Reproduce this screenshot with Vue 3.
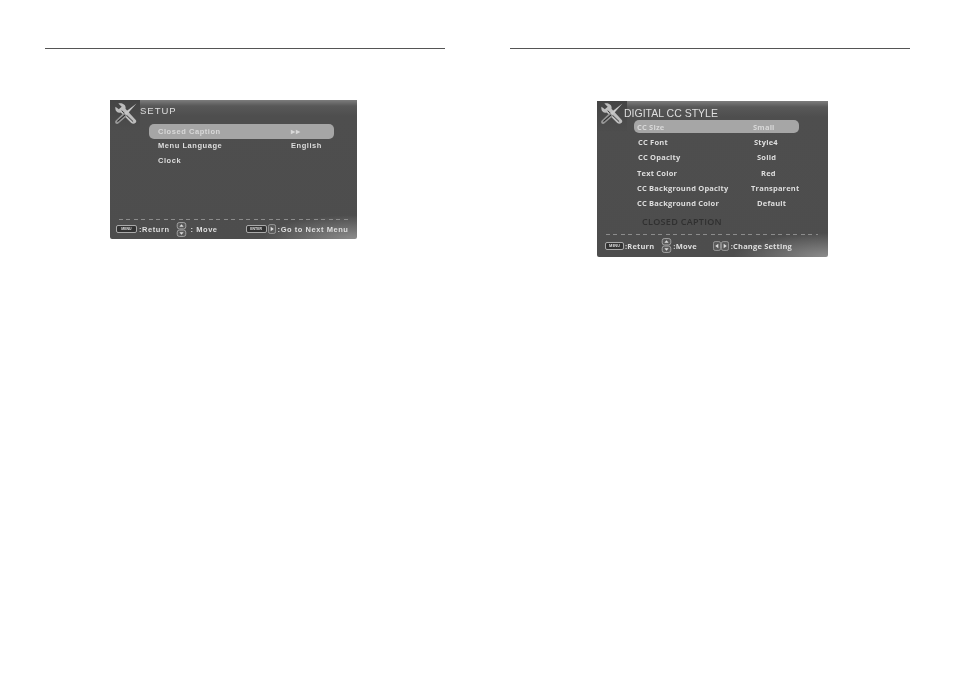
<script setup>
const setupRows = [
  { label: 'Closed Caption', value: '▸▸', active: true },
  { label: 'Menu Language', value: 'English' },
  { label: 'Clock', value: '' }
]

const styleRows = [
  { label: 'CC Size', value: 'Small', active: true, left: 3, right: 119, height: 13 },
  { label: 'CC Font', value: 'Style4', left: 4, right: 120, height: 15 },
  { label: 'CC Opacity', value: 'Solid', left: 4, right: 123, height: 16 },
  { label: 'Text Color', value: 'Red', left: 3, right: 127, height: 15 },
  { label: 'CC Background Opacity', value: 'Transparent', left: 3, right: 117, height: 15 },
  { label: 'CC Background Color', value: 'Default', left: 3, right: 123, height: 15 }
]
</script>

<template>
  <div class="sheet">
    <section class="page">
      <div class="rule"></div>
      <div class="screen screen-setup">
        <header class="head">
          <svg class="tools" viewBox="0 0 24 22">
            <path d="M1.5 4 C0.5 8.500 4 11 7 10 L18 21 C21 23 25 20 22.500 17.500 L12 6 C13 2 8.500 -0.500 4.500 0.500 L8 4 L5 6.500 Z" fill="#bdbdbd" />
            <path d="M8 8 L20 19.500" stroke="#2e2e2e" stroke-width="1" />
            <path d="M23.500 0.500 L10.500 10.500 L12.500 13 Z" fill="#c8c8c8" />
            <path d="M10.500 10 L1.500 18.500 C0 21 3 23 4.500 21.500 L13.500 13.500 Z" fill="#969696" />
            <path d="M3.500 19.500 L11.500 12.500" stroke="#262626" stroke-width="1.100" />
          </svg>
          <h1 class="title">SETUP</h1>
        </header>
        <ul class="menu">
          <li v-for="row in setupRows" :key="row.label" class="row" :class="{ active: row.active }">
            <span class="label">{{ row.label }}</span>
            <span class="value">{{ row.value }}</span>
          </li>
        </ul>
        <div class="dashes"></div>
        <footer class="foot">
          <span class="key">MENU</span>
          <span class="hint">:Return</span>
          <svg class="updown" viewBox="0 0 10 14">
            <rect x="1" y="0.5" width="8" height="6" rx="2" fill="#5a5a5a" stroke="#bbb" stroke-width="0.7" />
            <rect x="1" y="7.5" width="8" height="6" rx="2" fill="#5a5a5a" stroke="#bbb" stroke-width="0.7" />
            <path d="M5 2 L7 4.5 H3 Z M5 12 L7 9.5 H3 Z" fill="#ddd" />
          </svg>
          <span class="hint hint-move">: Move</span>
          <span class="key key-enter">ENTER</span>
          <svg class="square" viewBox="0 0 9 11">
            <rect x="0.5" y="0.5" width="8" height="10" rx="2" fill="#5a5a5a" stroke="#bbb" stroke-width="0.7" />
            <path d="M3 3 L6.5 5.5 L3 8 Z" fill="#ddd" />
          </svg>
          <span class="hint">:Go to Next Menu</span>
        </footer>
      </div>
    </section>

    <section class="page page-right">
      <div class="rule"></div>
      <div class="screen screen-style">
        <header class="head">
          <svg class="tools" viewBox="0 0 24 22">
            <path d="M1.5 4 C0.5 8.500 4 11 7 10 L18 21 C21 23 25 20 22.500 17.500 L12 6 C13 2 8.500 -0.500 4.500 0.500 L8 4 L5 6.500 Z" fill="#bdbdbd" />
            <path d="M8 8 L20 19.500" stroke="#2e2e2e" stroke-width="1" />
            <path d="M23.500 0.500 L10.500 10.500 L12.500 13 Z" fill="#c8c8c8" />
            <path d="M10.500 10 L1.500 18.500 C0 21 3 23 4.500 21.500 L13.500 13.500 Z" fill="#969696" />
            <path d="M3.500 19.500 L11.500 12.500" stroke="#262626" stroke-width="1.100" />
          </svg>
          <h1 class="title">DIGITAL CC STYLE</h1>
        </header>
        <ul class="menu">
          <li
            v-for="row in styleRows"
            :key="row.label"
            class="row"
            :class="{ active: row.active }"
            :style="{ height: row.height + 'px' }"
          >
            <span class="label" :style="{ marginLeft: row.left + 'px' }">{{ row.label }}</span>
            <span class="value" :style="{ left: row.right + 'px' }">{{ row.value }}</span>
          </li>
        </ul>
        <p class="preview">CLOSED CAPTION</p>
        <div class="dashes"></div>
        <footer class="foot">
          <span class="key">MENU</span>
          <span class="hint">:Return</span>
          <svg class="updown" viewBox="0 0 10 14">
            <rect x="1" y="0.5" width="8" height="6" rx="2" fill="#5a5a5a" stroke="#bbb" stroke-width="0.7" />
            <rect x="1" y="7.5" width="8" height="6" rx="2" fill="#5a5a5a" stroke="#bbb" stroke-width="0.7" />
            <path d="M5 2 L7 4.5 H3 Z M5 12 L7 9.5 H3 Z" fill="#ddd" />
          </svg>
          <span class="hint hint-move">:Move</span>
          <svg class="square square-left" viewBox="0 0 9 11">
            <rect x="0.5" y="0.5" width="8" height="10" rx="2" fill="#5a5a5a" stroke="#bbb" stroke-width="0.7" />
            <path d="M6 3 L2.5 5.5 L6 8 Z" fill="#ddd" />
          </svg>
          <svg class="square" viewBox="0 0 9 11">
            <rect x="0.5" y="0.5" width="8" height="10" rx="2" fill="#5a5a5a" stroke="#bbb" stroke-width="0.7" />
            <path d="M3 3 L6.5 5.5 L3 8 Z" fill="#ddd" />
          </svg>
          <span class="hint">:Change Setting</span>
        </footer>
      </div>
    </section>
  </div>
</template>

<style scoped>
* {
  margin: 0;
  padding: 0;
  box-sizing: border-box;
}

.sheet {
  display: flex;
  width: 954px;
  height: 675px;
  background: #fff;
  font-family: "Liberation Sans", Arial, sans-serif;
}

.page {
  width: 465px;
  padding: 48px 0 0 45px;
}

.page-right {
  width: 489px;
}

.rule {
  width: 400px;
  height: 1px;
  background: #555;
}

.screen {
  position: relative;
  overflow: hidden;
  color: #dedede;
  background:
    radial-gradient(ellipse 95px 24px at 100% 100%, #8c8c8c, transparent),
    linear-gradient(180deg, #7c7c7c 0, #585858 6px, #4e4e4e 16px, #4d4d4d 100%);
  border-radius: 0 0 2px 2px;
  filter: blur(0.45px);
}

.screen::before {
  content: "";
  position: absolute;
  top: 0;
  left: 0;
  width: 30px;
  height: 30px;
  background: linear-gradient(180deg, #444, #4d4d4d);
}

.screen-setup {
  width: 247px;
  height: 139px;
  margin: 51px 0 0 65px;
}

.screen-style {
  width: 231px;
  height: 156px;
  margin: 52px 0 0 87px;
}

.head {
  position: relative;
  display: flex;
  align-items: center;
}

.screen-setup .head {
  height: 24px;
  padding: 2px 0 0 4px;
}

.screen-style .head {
  height: 19px;
  padding: 5px 0 0 3px;
}

.tools {
  width: 23px;
  height: 21px;
  flex: none;
}

.title {
  font-size: 9.5px;
  font-weight: 400;
  letter-spacing: 1px;
  margin: -6px 0 0 3px;
  white-space: nowrap;
}

.screen-style .title {
  font-size: 10.5px;
  letter-spacing: 0;
  margin: -1px 0 0 1px;
}

.menu {
  list-style: none;
}

.screen-setup .menu {
  margin-left: 39px;
  width: 185px;
}

.screen-style .menu {
  margin-left: 37px;
  width: 165px;
}

.row {
  position: relative;
  display: flex;
  align-items: center;
  font-size: 7.5px;
  font-weight: 700;
  white-space: nowrap;
}

.screen-setup .row {
  height: 14.5px;
  letter-spacing: 0.55px;
}

.screen-setup .label {
  margin-left: 9px;
}

.screen-setup .value {
  position: absolute;
  left: 142px;
}

.screen-style .row {
  font-family: "Open Sans", "Liberation Sans", sans-serif;
  letter-spacing: 0.2px;
}

.screen-style .value {
  position: absolute;
}

.row.active {
  background: #a6a6a6;
  border-radius: 5px;
  color: #d8d8d8;
}

.screen-style .row.active {
  margin-bottom: 1px;
}

.preview {
  margin: 6px 0 0 45px;
  font-family: "Open Sans", "Liberation Sans", sans-serif;
  font-size: 9px;
  font-weight: 600;
  letter-spacing: 0.3px;
  line-height: 12px;
  color: #303030;
}

.dashes {
  margin-left: 9px;
  width: 229px;
  height: 1px;
  background: repeating-linear-gradient(90deg, #8c8c8c 0 4px, transparent 4px 7.5px);
}

.screen-setup .dashes {
  margin-top: 51px;
}

.screen-style .dashes {
  margin-top: 6px;
  width: 212px;
}

.foot {
  position: relative;
  display: flex;
  align-items: center;
  height: 19px;
  padding-left: 6px;
  font-size: 7.5px;
  font-weight: 700;
  white-space: nowrap;
}

.screen-setup .foot {
  letter-spacing: 0.55px;
}

.screen-style .foot {
  margin-top: 1px;
  padding-left: 8px;
  font-family: "Open Sans", "Liberation Sans", sans-serif;
  letter-spacing: 0.18px;
}

.key {
  display: block;
  width: 21px;
  height: 8px;
  margin-right: 2px;
  border: 1px solid #aaa;
  border-radius: 2px;
  background: #333;
  font-size: 3.5px;
  line-height: 6px;
  letter-spacing: 0;
  text-align: center;
}

.screen-style .key {
  width: 19px;
  margin-right: 1px;
}

.key-enter {
  margin: 0 1px 0 28px;
}

.updown {
  width: 11px;
  height: 15px;
  margin-left: 6px;
}

.screen-style .updown {
  margin-left: 7px;
}

.hint-move {
  margin-left: 4px;
}

.screen-style .hint-move {
  margin-left: 1px;
}

.square {
  width: 8px;
  height: 10px;
  margin-right: 2px;
}

.square-left {
  margin: 0 0 0 16px;
}
</style>
